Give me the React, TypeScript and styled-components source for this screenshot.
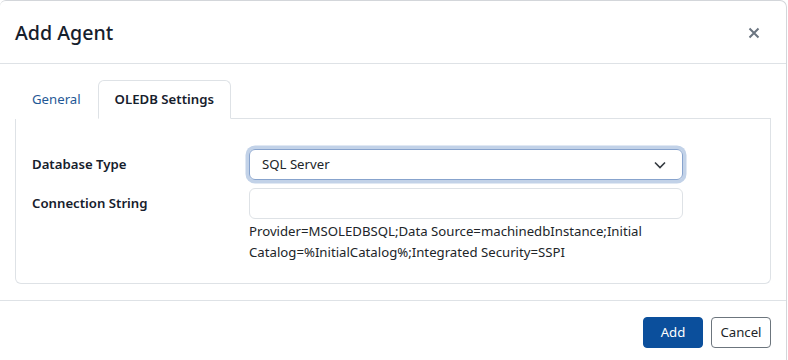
import React from "react";
import styled, { createGlobalStyle } from "styled-components";

const Global = createGlobalStyle`
  html, body { margin: 0; padding: 0; background: #ffffff; }
  body { font-family: "Noto Sans", "Open Sans", sans-serif; font-size: 13.2px; line-height: 1.5; color: #212529; }
  * { box-sizing: border-box; }
`;

const Modal = styled.div`
  width: 787px;
  background: #fff;
  border-top: 1px solid #d3d6da;
  border-right: 1px solid #d3d6da;
  border-top-right-radius: 7px;
  border-top-left-radius: 6px;
`;

const Header = styled.div`
  height: 63px;
  display: flex;
  align-items: center;
  justify-content: space-between;
  padding: 2px 26px 0 15px;
  border-bottom: 1px solid #dee2e6;
`;

const Title = styled.h5`
  margin: 0;
  font-size: 19.6px;
  font-weight: 500;
  color: #16202c;
  line-height: 1.5;
`;

const CloseButton = styled.button`
  border: 0;
  background: transparent;
  padding: 0;
  width: 12px;
  height: 12px;
  display: flex;
  cursor: pointer;
`;

const Body = styled.div`
  padding: 16px 15px;
`;

const TabList = styled.div`
  display: flex;
  border-bottom: 1px solid #dee2e6;
`;

const Tab = styled.button<{ $active?: boolean }>`
  font: inherit;
  font-size: 13.2px;
  line-height: 21px;
  padding: 8px 16px;
  margin-bottom: -1px;
  border: 1px solid ${(p) => (p.$active ? "#dee2e6" : "transparent")};
  border-bottom-color: ${(p) => (p.$active ? "#fff" : "transparent")};
  border-radius: 6px 6px 0 0;
  background: #fff;
  color: ${(p) => (p.$active ? "#16202c" : "#1f5896")};
  font-weight: ${(p) => (p.$active ? 600 : 400)};
  cursor: pointer;
`;

const Panel = styled.div`
  border: 1px solid #dee2e6;
  border-top: none;
  border-radius: 0 0 6px 6px;
  padding: 30px 16px 20px;
`;

const FormGrid = styled.div`
  display: grid;
  grid-template-columns: 217px 434px;
  row-gap: 8px;
  align-items: start;
`;

const Label = styled.label`
  font-weight: 600;
  font-size: 13.2px;
  line-height: 21px;
  padding-top: 5px;
  color: #16202c;
`;

const SelectBox = styled.div`
  position: relative;
  height: 31px;
  border: 1px solid #87a3cd;
  border-radius: 6px;
  box-shadow: 0 0 0 3.5px #c2d2e8;
  display: flex;
  align-items: center;
  padding: 0 12px;
  color: #212529;
`;

const Chevron = styled.svg`
  position: absolute;
  right: 16px;
  top: 11px;
`;

const Input = styled.input`
  height: 31px;
  width: 100%;
  border: 1px solid #dee2e6;
  border-radius: 6px;
  font: inherit;
  padding: 0 12px;
  outline: none;
`;

const FieldCol = styled.div`
  display: flex;
  flex-direction: column;
`;

const Help = styled.div`
  margin-top: 2px;
  font-size: 13.2px;
  line-height: 21px;
  color: #212529;
`;

const Footer = styled.div`
  border-top: 1px solid #dee2e6;
  padding: 16px 15px 16px;
  display: flex;
  justify-content: flex-end;
  gap: 8px;
`;

const Button = styled.button<{ $primary?: boolean }>`
  font: inherit;
  font-size: 13.2px;
  line-height: 21px;
  min-width: 60px;
  height: 31px;
  padding: 0 8px;
  border-radius: 4px;
  border: 1px solid ${(p) => (p.$primary ? "#0b4f9c" : "#6c757d")};
  background: ${(p) => (p.$primary ? "#0b4f9c" : "#fff")};
  color: ${(p) => (p.$primary ? "#fff" : "#212529")};
  cursor: pointer;
`;

export default function App() {
  return (
    <>
      <Global />
      <Modal>
        <Header>
          <Title>Add Agent</Title>
          <CloseButton aria-label="Close">
            <svg width="12" height="12" viewBox="0 0 12 12">
              <path d="M1.5 1.5 L10.5 10.5 M10.5 1.5 L1.5 10.5" stroke="#6b7580" strokeWidth="2" strokeLinecap="butt" />
            </svg>
          </CloseButton>
        </Header>
        <Body>
          <TabList>
            <Tab>General</Tab>
            <Tab $active>OLEDB Settings</Tab>
          </TabList>
          <Panel>
            <FormGrid>
              <Label>Database Type</Label>
              <SelectBox>
                SQL Server
                <Chevron width="12" height="8" viewBox="0 0 12 8">
                  <path d="M1 1.5 L6 6.5 L11 1.5" fill="none" stroke="#343a40" strokeWidth="1.6" />
                </Chevron>
              </SelectBox>
              <Label>Connection String</Label>
              <FieldCol>
                <Input type="text" />
                <Help>
                  Provider=MSOLEDBSQL;Data Source=machinedbInstance;Initial Catalog=%InitialCatalog%;Integrated Security=SSPI
                </Help>
              </FieldCol>
            </FormGrid>
          </Panel>
        </Body>
        <Footer>
          <Button $primary>Add</Button>
          <Button>Cancel</Button>
        </Footer>
      </Modal>
    </>
  );
}
